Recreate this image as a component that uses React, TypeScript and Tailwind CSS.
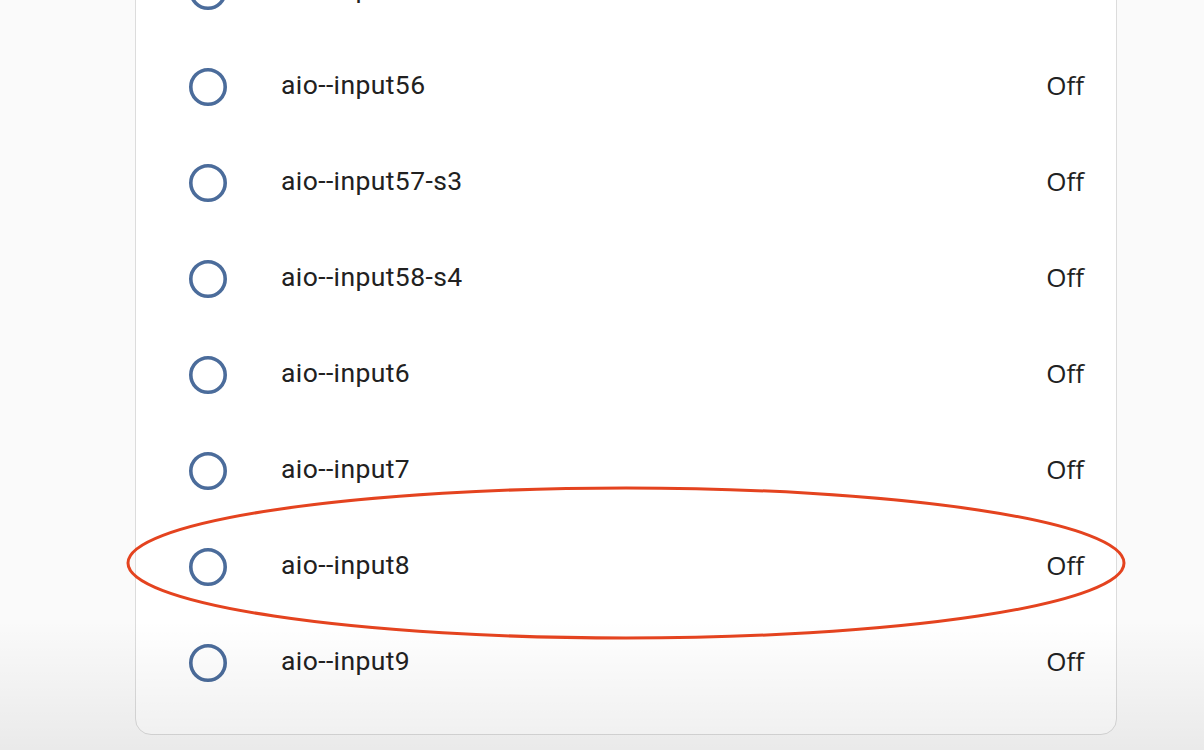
import React from 'react';

const entities = [
  'aio--input55',
  'aio--input56',
  'aio--input57-s3',
  'aio--input58-s4',
  'aio--input6',
  'aio--input7',
  'aio--input8',
  'aio--input9',
];

const RadioboxBlank: React.FC = () => (
  <svg width="48" height="48" viewBox="0 0 48 48" aria-hidden="true">
    <circle cx="24" cy="24" r="17.2" fill="none" stroke="#4b6c9b" strokeWidth="3.6" />
  </svg>
);

const EntityRow: React.FC<{ name: string; state: string }> = ({ name, state }) => (
  <div className="flex h-[96px] items-center">
    <div className="flex h-12 w-12 shrink-0 items-center justify-center">
      <RadioboxBlank />
    </div>
    <div className="mb-1 ml-[49px] flex-1 truncate font-['Roboto',sans-serif] text-[26.5px] tracking-[0.4px] text-[#212121]">
      {name}
    </div>
    <div className="mb-1 font-['Open_Sans',sans-serif] text-[26px] text-[#212121]">{state}</div>
  </div>
);

export default function App() {
  return (
    <div className="relative h-[750px] w-[1204px] overflow-hidden bg-[#fafafa]">
      <div className="ml-[135px] mr-[87px] -mt-[58px] rounded-[16px] border border-[#dcdcdc] bg-white pb-[23px] pl-[48px] pr-[32px]">
        {entities.map((name) => (
          <EntityRow key={name} name={name} state="Off" />
        ))}
      </div>

      <div className="pointer-events-none absolute inset-x-0 bottom-0 h-[130px] bg-gradient-to-b from-transparent to-black/[0.065]" />

      <svg
        className="pointer-events-none absolute left-0 top-0"
        width="1204"
        height="750"
        viewBox="0 0 1204 750"
        aria-hidden="true"
      >
        <ellipse cx="626" cy="563" rx="498" ry="75" fill="none" stroke="#e4431f" strokeWidth="3" />
      </svg>
    </div>
  );
}
